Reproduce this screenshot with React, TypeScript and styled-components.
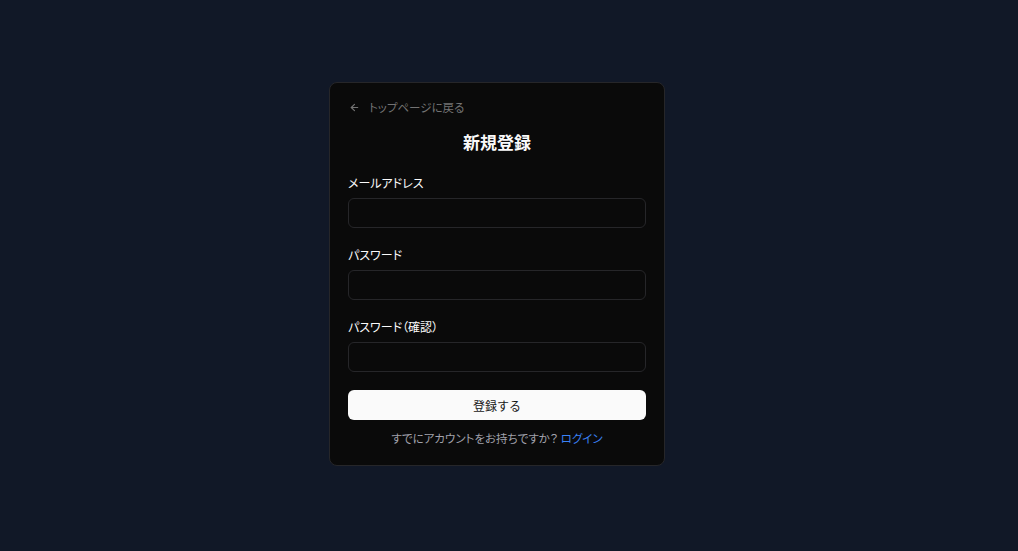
import styled, { createGlobalStyle } from "styled-components"

const GlobalStyle = createGlobalStyle`
  html, body {
    margin: 0;
    padding: 0;
    background: #111827;
  }
  body {
    font-family: "Noto Sans CJK JP", "Noto Sans", sans-serif;
    font-feature-settings: "palt";
  }
`

const Page = styled.div`
  min-height: 551px;
  display: flex;
  align-items: center;
  justify-content: center;
  padding: 0 24px 3px 0;
  box-sizing: border-box;
`

const Card = styled.div`
  width: 336px;
  box-sizing: border-box;
  background: #0a0a0a;
  border: 1px solid #262629;
  border-radius: 8px;
  padding: 16px 18px 18px;
  color: #fafafa;
`

const BackLink = styled.a`
  display: flex;
  align-items: center;
  gap: 9px;
  font-size: 11.5px;
  line-height: 16px;
  color: #737373;
  text-decoration: none;
  margin-left: 1px;
  svg {
    width: 11px;
    height: 11px;
  }
`

const Title = styled.h1`
  margin: 16px 0 22px;
  text-align: center;
  font-size: 17px;
  line-height: 22px;
  font-weight: 700;
`

const Form = styled.form`
  display: flex;
  flex-direction: column;
  gap: 19px;
`

const Field = styled.div`
  display: flex;
  flex-direction: column;
  gap: 7px;
`

const Label = styled.label`
  font-size: 12px;
  line-height: 16px;
  color: #fafafa;
`

const Input = styled.input`
  height: 30px;
  box-sizing: border-box;
  width: 100%;
  background: transparent;
  border: 1px solid #262629;
  border-radius: 6px;
  color: #fafafa;
  padding: 0 10px;
  outline: none;
`

const Button = styled.button`
  width: 100%;
  height: 30px;
  border: none;
  border-radius: 6px;
  background: #fafafa;
  color: #171717;
  font-family: inherit;
  font-size: 12px;
  margin-top: -1px;
  cursor: pointer;
`

const Footer = styled.p`
  margin: 9px 0 0;
  text-align: center;
  font-size: 11.5px;
  line-height: 18px;
  color: #a1a1aa;
  a {
    color: #3b82f6;
    text-decoration: none;
  }
`

const fields = [
  { id: "email", label: "メールアドレス", type: "email" },
  { id: "password", label: "パスワード", type: "password" },
  { id: "confirm", label: "パスワード（確認）", type: "password" },
]

const App = () => {
  return (
    <>
      <GlobalStyle />
      <Page>
        <Card>
          <BackLink href="#">
            <svg viewBox="0 0 24 24" fill="none" stroke="currentColor" strokeWidth="2.5" strokeLinecap="round" strokeLinejoin="round">
              <path d="M19 12H5" />
              <path d="M12 19l-7-7 7-7" />
            </svg>
            トップページに戻る
          </BackLink>
          <Title>新規登録</Title>
          <Form onSubmit={(e) => e.preventDefault()}>
            {fields.map((f) => (
              <Field key={f.id}>
                <Label htmlFor={f.id}>{f.label}</Label>
                <Input id={f.id} type={f.type} />
              </Field>
            ))}
            <Button type="submit">登録する</Button>
          </Form>
          <Footer>
            すでにアカウントをお持ちですか？ <a href="#">ログイン</a>
          </Footer>
        </Card>
      </Page>
    </>
  )
}

export default App
